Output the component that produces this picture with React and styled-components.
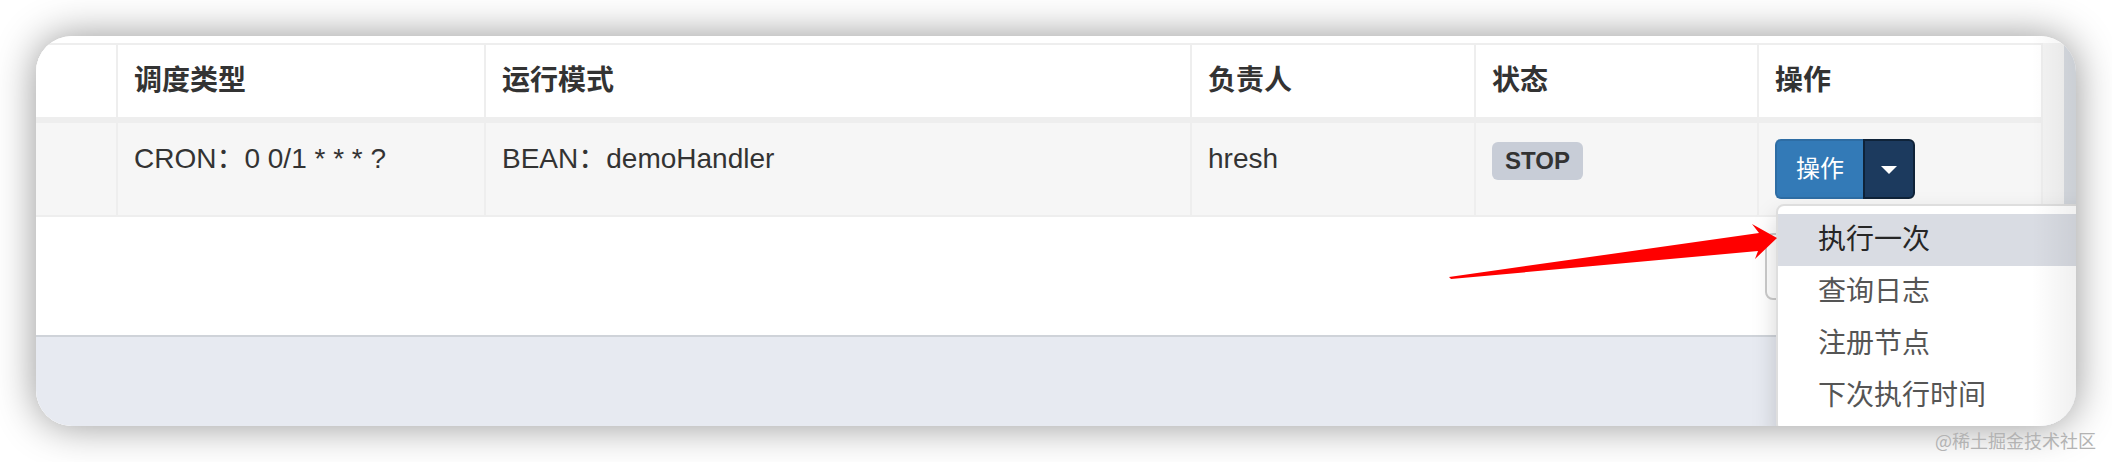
import React from 'react';
import styled, { createGlobalStyle } from 'styled-components';

const GlobalStyle = createGlobalStyle`
  html, body {
    margin: 0;
    padding: 0;
    background: #fff;
  }
  body {
    font-family: "Liberation Sans", "Noto Sans CJK SC", sans-serif;
    color: #333;
  }
  * {
    box-sizing: border-box;
  }
`;

const Stage = styled.div`
  position: relative;
  width: 2112px;
  height: 462px;
  padding: 36px;
  background: #fff;
  overflow: hidden;
`;

const Window = styled.div`
  position: relative;
  display: flex;
  height: 390px;
  border-radius: 36px;
  overflow: hidden;
  background: #fff;
  box-shadow: 0 0 40px rgba(0, 0, 0, 0.42);

  &::after {
    content: '';
    position: absolute;
    top: 0;
    right: 0;
    bottom: 0;
    width: 44px;
    background: linear-gradient(to right, rgba(0, 0, 0, 0), rgba(0, 0, 0, 0.06));
    pointer-events: none;
    z-index: 30;
  }
`;

const Main = styled.div`
  flex: 1;
  display: flex;
  flex-direction: column;
  padding-top: 7px;
  background: #fff;
`;

const Scrollbar = styled.div`
  width: 12px;
  background: #d8dce2;
`;

const TableRow = styled.div`
  display: flex;
  background: #f4f4f4;
`;

const Grid = styled.div`
  display: grid;
  grid-template-columns: 80px 368px 706px 284px 283px 284px;
  width: 2007px;
  border-top: 2px solid #eee;
  border-right: 2px solid #eee;
`;

const Cell = styled.div`
  padding: 16px;
  line-height: 40px;
  font-size: 28px;
  white-space: nowrap;
  color: #333;
  border-left: ${p => (p.$first ? 'none' : '2px solid #eee')};
  border-bottom: ${p => (p.$head ? '6px' : '2px')} solid #eee;
  background: ${p => (p.$head ? '#fff' : '#f6f6f6')};
  font-weight: ${p => (p.$head ? 700 : 400)};
`;

const Badge = styled.span`
  display: inline-block;
  vertical-align: top;
  margin-top: 3px;
  height: 38px;
  padding: 0 13px;
  line-height: 38px;
  font-size: 24px;
  font-weight: 700;
  color: #333;
  background: #c8cdd7;
  border-radius: 6px;
`;

const BtnGroup = styled.div`
  position: relative;
  display: inline-flex;
  vertical-align: top;
`;

const MainBtn = styled.button`
  height: 60px;
  padding: 0 19px;
  font-family: inherit;
  font-size: 24px;
  line-height: 1;
  color: #fff;
  background: #337ab7;
  border: 2px solid #2e6da4;
  border-right: none;
  border-radius: 6px 0 0 6px;
`;

const CaretBtn = styled.button`
  display: flex;
  align-items: center;
  justify-content: center;
  width: 52px;
  height: 60px;
  padding: 0;
  background: #1c3a5e;
  border: 2px solid #0f2339;
  border-radius: 0 6px 6px 0;
`;

const Caret = styled.span`
  width: 0;
  height: 0;
  margin-top: 2px;
  border-left: 8px solid transparent;
  border-right: 8px solid transparent;
  border-top: 8px solid #fff;
`;

const Menu = styled.ul`
  position: absolute;
  top: calc(100% + 5px);
  left: 1px;
  width: 340px;
  margin: 0;
  padding: 8px 0;
  list-style: none;
  background: #fff;
  border: 2px solid #dedede;
  border-radius: 8px;
  box-shadow: 0 12px 24px rgba(0, 0, 0, 0.175);
  z-index: 10;
`;

const MenuItem = styled.li`
  padding: 6px 40px;
  line-height: 40px;
  font-size: 28px;
  white-space: nowrap;
  color: ${p => (p.$active ? '#262626' : '#555')};
  background: ${p => (p.$active ? '#d9dce3' : 'transparent')};
`;

const Filler = styled.div`
  flex: 1;
`;

const Blank = styled.div`
  display: flex;
  justify-content: flex-end;
  height: 120px;
  padding: 16px 19px 0 0;
  background: #fff;
  border-bottom: 2px solid #cfd3d9;
`;

const HiddenBox = styled.div`
  width: 280px;
  height: 67px;
  border: 2px solid #ccc;
  border-radius: 8px;
  background: #fff;
`;

const Footer = styled.div`
  flex: 1;
  background: #e7eaf1;
`;

const Arrow = styled.svg`
  position: absolute;
  left: 1440px;
  top: 215px;
  z-index: 40;
`;

const Watermark = styled.div`
  position: absolute;
  left: 1935px;
  top: 429px;
  font-family: "Noto Sans CJK SC", sans-serif;
  font-size: 18px;
  line-height: 22px;
  color: #b3b3b3;
  white-space: nowrap;
  z-index: 40;
`;

const headers = ['', '调度类型', '运行模式', '负责人', '状态', '操作'];
const menuItems = ['执行一次', '查询日志', '注册节点', '下次执行时间'];

const App = () => (
  <Stage>
    <GlobalStyle />
    <Window>
      <Main>
        <TableRow>
          <Grid>
            {headers.map((h, i) => (
              <Cell key={i} $head $first={i === 0}>{h}</Cell>
            ))}
            <Cell $first />
            <Cell>CRON：0 0/1 * * * ?</Cell>
            <Cell>BEAN：demoHandler</Cell>
            <Cell>hresh</Cell>
            <Cell>
              <Badge>STOP</Badge>
            </Cell>
            <Cell>
              <BtnGroup>
                <MainBtn>操作</MainBtn>
                <CaretBtn>
                  <Caret />
                </CaretBtn>
                <Menu>
                  {menuItems.map((m, i) => (
                    <MenuItem key={m} $active={i === 0}>{m}</MenuItem>
                  ))}
                </Menu>
              </BtnGroup>
            </Cell>
          </Grid>
          <Filler />
        </TableRow>
        <Blank>
          <HiddenBox />
        </Blank>
        <Footer />
      </Main>
      <Scrollbar />
    </Window>
    <Arrow width="345" height="70" viewBox="0 0 345 70">
      <polygon
        points="9,62 319,18 312,9 337,23 315,44 318,36 11,64"
        fill="#ff0000"
      />
    </Arrow>
    <Watermark>@稀土掘金技术社区</Watermark>
  </Stage>
);

export default App;
